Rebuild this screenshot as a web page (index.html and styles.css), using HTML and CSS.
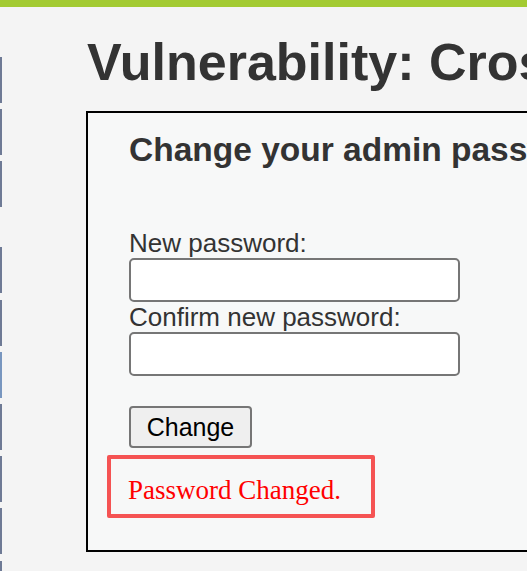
FILE: index.html
```html
<!DOCTYPE html>
<html lang="en">
<head>
<meta charset="utf-8">
<title>Vulnerability: Cross Site Request Forgery (CSRF)</title>
<link rel="stylesheet" href="styles.css">
</head>
<body>
<div class="topbar"></div>
<div class="layout">
  <nav class="menu">
    <div class="group">
      <span class="item"></span>
      <span class="item"></span>
      <span class="item"></span>
    </div>
    <div class="group">
      <span class="item"></span>
      <span class="item"></span>
      <span class="item active"></span>
      <span class="item"></span>
      <span class="item"></span>
      <span class="item"></span>
      <span class="item"></span>
    </div>
  </nav>
  <main class="content">
    <h1 class="title">Vulnerability: Cross Site Request Forgery (CSRF)</h1>
    <div class="box">
      <h3 class="subtitle">Change your admin password:</h3>
      <form class="form">
        <label class="label" for="pw1">New password:</label>
        <input class="field" id="pw1" type="password">
        <label class="label" for="pw2">Confirm new password:</label>
        <input class="field" id="pw2" type="password">
        <button class="btn" type="button">Change</button>
      </form>
      <pre class="msg">Password Changed.</pre>
    </div>
  </main>
</div>
</body>
</html>
```
FILE: styles.css
```css
html, body {
  margin: 0;
  padding: 0;
  overflow: hidden;
  background: #f4f4f4;
  font-family: "Liberation Sans", Arial, sans-serif;
  color: #333;
}

.topbar {
  height: 7px;
  background: #a3cb32;
}

.layout {
  display: flex;
  align-items: flex-start;
}

.menu {
  width: 2px;
  flex: none;
  padding-top: 50px;
  display: flex;
  flex-direction: column;
  gap: 40px;
}

.group {
  display: flex;
  flex-direction: column;
  gap: 6.2px;
}

.item {
  display: block;
  width: 2px;
  height: 46px;
  background: #6e7a95;
}

.item.active {
  background: #7896bf;
}

.content {
  margin-left: 84px;
  flex: none;
  width: 560px;
}

.title {
  margin: 25px 0 19px 1px;
  font-size: 52px;
  line-height: 60px;
  font-weight: bold;
  white-space: nowrap;
  color: #333;
}

.box {
  border: 2px solid #000;
  background: #f7f8f8;
  padding: 17px 0 32px 41px;
}

.subtitle {
  margin: 0 0 58px;
  font-size: 33.5px;
  line-height: 40px;
  font-weight: bold;
  white-space: nowrap;
  color: #333;
}

.form {
  display: flex;
  flex-direction: column;
  align-items: flex-start;
  margin: 0;
}

.label {
  display: block;
  font-size: 26px;
  line-height: 30px;
  color: #333;
}

.field {
  box-sizing: border-box;
  width: 331px;
  height: 44px;
  margin: 0;
  border: 2px solid #767676;
  border-radius: 5px;
  background: #fff;
}

.btn {
  box-sizing: border-box;
  margin: 30px 0 0;
  width: 123px;
  height: 42px;
  padding: 0;
  border: 2px solid #767676;
  border-radius: 4px;
  background: #efefef;
  color: #000;
  font-family: "Liberation Sans", Arial, sans-serif;
  font-size: 25px;
}

.msg {
  box-sizing: border-box;
  width: 268px;
  margin: 7px 0 0 -22px;
  padding: 16px 0 9px 17px;
  border: 4px solid #f55353;
  border-radius: 2px;
  color: #ff0000;
  font-family: "Liberation Serif", "Times New Roman", serif;
  font-size: 27px;
  line-height: 30px;
  white-space: nowrap;
}
```
